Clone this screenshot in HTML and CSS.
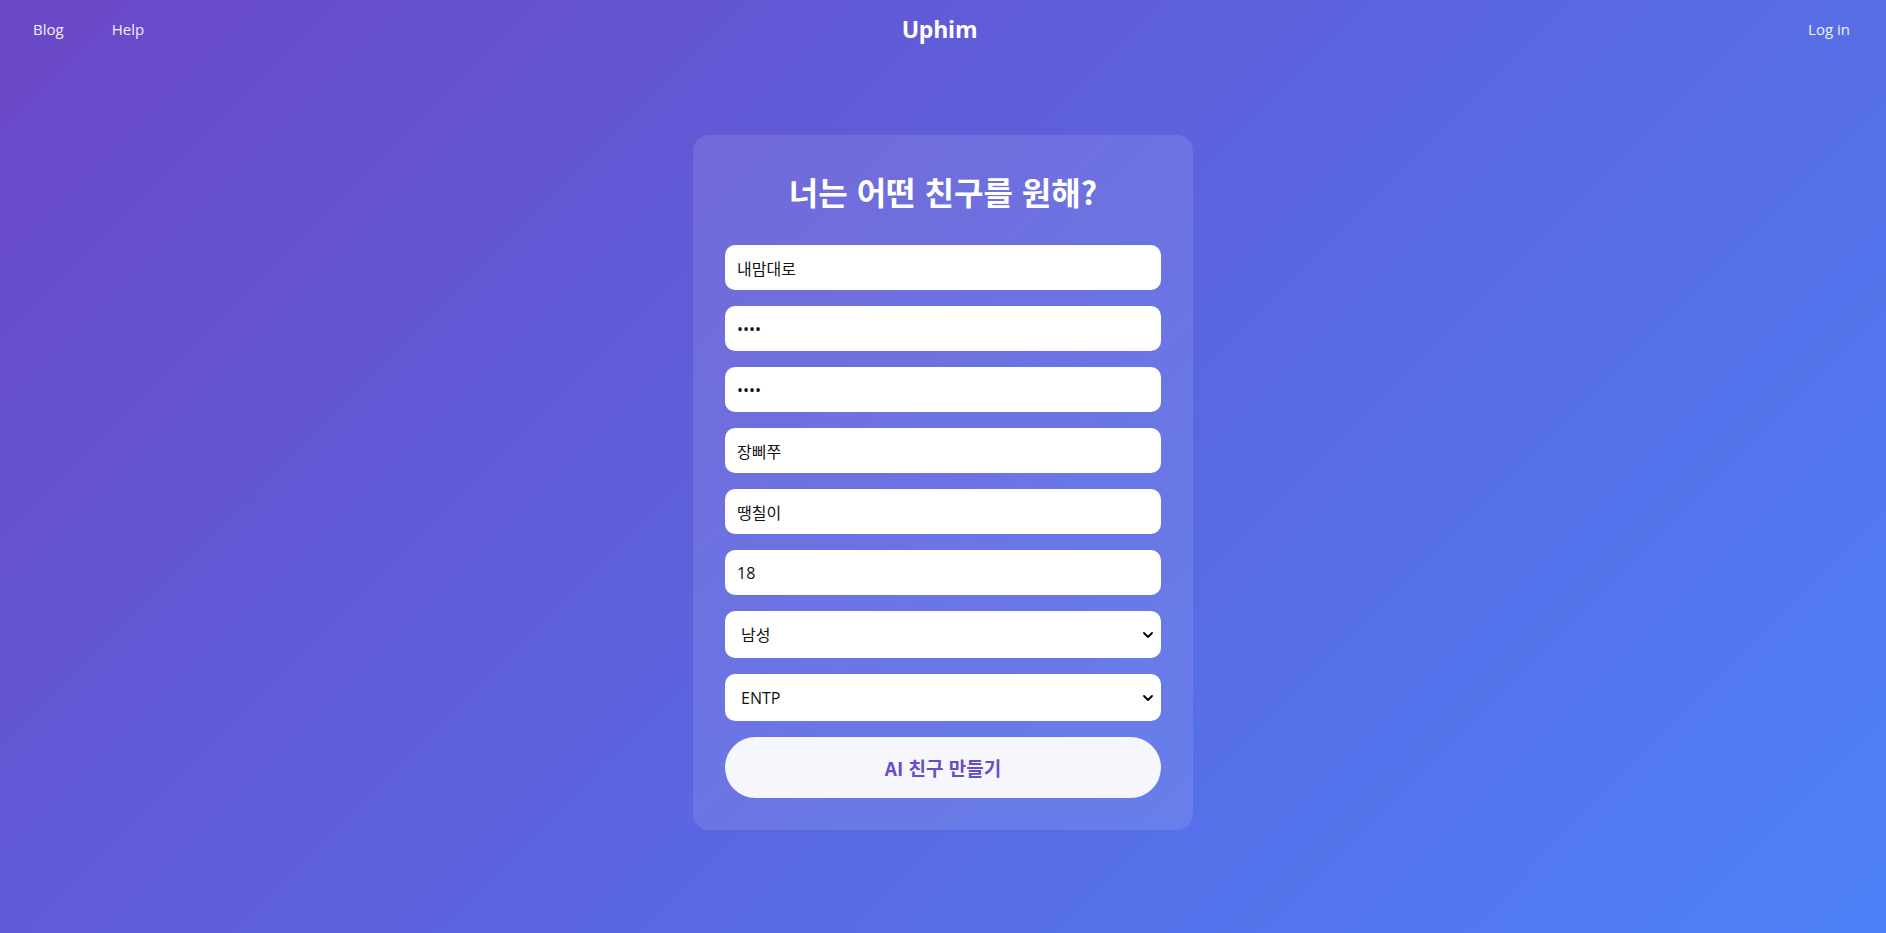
FILE: index.html
```html
<!DOCTYPE html>
<html lang="ko">
<head>
<meta charset="utf-8">
<title>Uphim</title>
<link rel="stylesheet" href="styles.css">
</head>
<body>
<header class="topbar">
  <nav class="nav-left">
    <a class="nav-link" href="#">Blog</a>
    <a class="nav-link" href="#">Help</a>
  </nav>
  <div class="logo">Uphim</div>
  <nav class="nav-right">
    <a class="nav-link" href="#">Log in</a>
  </nav>
</header>
<main class="main">
  <form class="card">
    <h1 class="title">너는 어떤 친구를 원해?</h1>
    <input class="field" type="text" value="내맘대로">
    <input class="field" type="password" value="1234">
    <input class="field" type="password" value="1234">
    <input class="field" type="text" value="장삐쭈">
    <input class="field" type="text" value="땡칠이">
    <input class="field" type="text" value="18">
    <div class="select-wrap">
      <select class="field select">
        <option>남성</option>
        <option>여성</option>
      </select>
      <svg class="chev" viewBox="0 0 10 6" width="10" height="6"><path d="M1 1l4 4 4-4" fill="none" stroke="#000" stroke-width="1.8" stroke-linecap="round" stroke-linejoin="round"/></svg>
    </div>
    <div class="select-wrap">
      <select class="field select">
        <option>ENTP</option>
        <option>INTJ</option>
      </select>
      <svg class="chev" viewBox="0 0 10 6" width="10" height="6"><path d="M1 1l4 4 4-4" fill="none" stroke="#000" stroke-width="1.8" stroke-linecap="round" stroke-linejoin="round"/></svg>
    </div>
    <button class="submit" type="button">AI 친구 만들기</button>
  </form>
</main>
</body>
</html>
```

FILE: styles.css
```css
* { box-sizing: border-box; }
html, body { height: 100%; }
body {
  margin: 0;
  min-height: 100vh;
  background: linear-gradient(135deg, #6b47c7 0%, #4d81f7 100%);
  font-family: "Open Sans", "Noto Sans", "Noto Sans CJK KR", sans-serif;
  color: #fff;
}
.topbar {
  height: 58px;
  padding: 0 36px 0 33px;
  display: grid;
  grid-template-columns: 1fr auto 1fr;
  align-items: center;
}
.nav-left { display: flex; gap: 48px; }
.nav-right { display: flex; justify-content: flex-end; }
.nav-link {
  color: #f2f0ff;
  text-decoration: none;
  font-size: 15px;
}
.logo {
  font-family: "Open Sans", "Noto Sans", sans-serif;
  font-weight: 700;
  font-size: 23px;
  color: #fff;
  letter-spacing: -0.2px;
  margin-right: 4px;
}
.main {
  display: flex;
  justify-content: center;
  padding-top: 77px;
}
.card {
  width: 500px;
  padding: 32px;
  border-radius: 16px;
  background: rgba(255, 255, 255, 0.1);
  display: flex;
  flex-direction: column;
  gap: 16px;
}
.title {
  margin: 5px 0 19px;
  font-family: "Noto Sans CJK KR", sans-serif;
  font-size: 32px;
  font-weight: 700;
  line-height: 38px;
  text-align: center;
  color: #fff;
}
.field {
  display: block;
  width: 100%;
  height: 45px;
  border: none;
  border-radius: 10px;
  background: #fff;
  padding: 0 12px;
  font-family: "Open Sans", "Noto Sans CJK KR", sans-serif;
  font-size: 16px;
  color: #111;
  outline: none;
}
.select-wrap { position: relative; }
.select {
  height: 47px;
  padding: 0 16px;
  appearance: none;
  -webkit-appearance: none;
}
.chev {
  position: absolute;
  right: 8px;
  top: 21px;
  pointer-events: none;
}
.submit {
  height: 61px;
  border: none;
  border-radius: 31px;
  background: #f5f7fd;
  color: #6a4cc8;
  font-family: "Noto Sans CJK KR", sans-serif;
  font-weight: 700;
  font-size: 19px;
  cursor: pointer;
}
```
